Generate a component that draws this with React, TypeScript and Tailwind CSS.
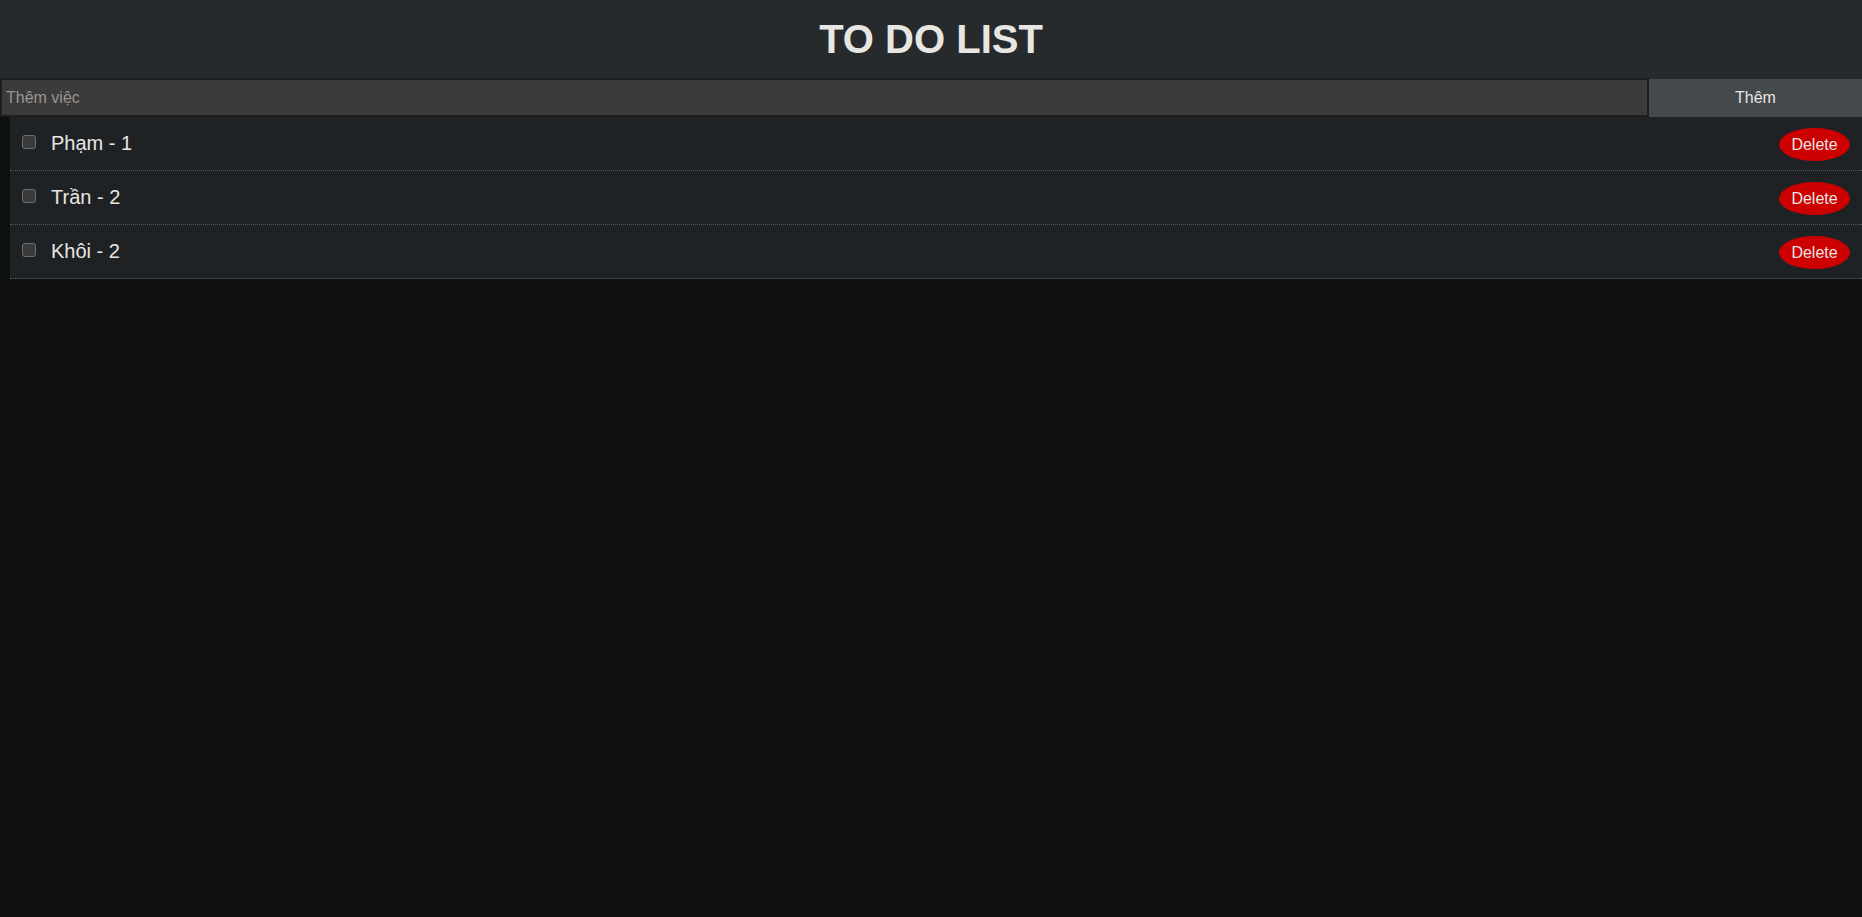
import { useState } from 'react';

type Todo = { id: number; title: string; done: boolean };

const INITIAL: Todo[] = [
  { id: 1, title: 'Phạm - 1', done: false },
  { id: 2, title: 'Trần - 2', done: false },
  { id: 3, title: 'Khôi - 2', done: false },
];

export default function App() {
  const [todos, setTodos] = useState<Todo[]>(INITIAL);
  const [text, setText] = useState('');

  const addTodo = () => {
    if (!text.trim()) return;
    setTodos([...todos, { id: Date.now(), title: text.trim(), done: false }]);
    setText('');
  };

  return (
    <div className="min-h-screen bg-[#0f1110] font-['Liberation_Sans',Arial,sans-serif] text-[#e8e6e3]">
      {/* Header */}
      <header className="h-[78px] bg-[#262a2c] flex items-center justify-center">
        <h1 className="text-[40px] font-bold leading-none tracking-normal">TO DO LIST</h1>
      </header>

      {/* Input row */}
      <div className="flex h-[39px] bg-[#262a2c]">
        <input
          autoFocus
          value={text}
          onChange={(e) => setText(e.target.value)}
          placeholder="Thêm việc"
          className="flex-1 min-w-0 h-full bg-[#3b3b3b] border-2 border-[#1b1d1e] px-[4px] text-[16px] text-[#e8e6e3] placeholder:text-[#9a9590] outline-none"
        />
        <button
          onClick={addTodo}
          className="w-[213px] h-[38px] mt-[1px] bg-[#44494c] text-[16px] text-[#e8e6e3]"
        >
          Thêm
        </button>
      </div>

      {/* List */}
      <ul className="ml-[10px] bg-[#1f2224]">
        {todos.map((todo) => (
          <li
            key={todo.id}
            className="h-[54px] flex items-center pl-[12px] pr-[12px] border-b border-dotted border-[#5a5a5a]"
          >
            <input
              type="checkbox"
              checked={todo.done}
              onChange={() =>
                setTodos(todos.map((t) => (t.id === todo.id ? { ...t, done: !t.done } : t)))
              }
              className="appearance-none w-[14px] h-[14px] -mt-[4px] rounded-[3px] border border-[#6e6e6e] bg-[#3a3a3a] shrink-0"
            />
            <span className={`ml-[15px] text-[20px] -mt-[1px] ${todo.done ? 'line-through' : ''}`}>
              {todo.title}
            </span>
            <button
              onClick={() => setTodos(todos.filter((t) => t.id !== todo.id))}
              className="ml-auto w-[71px] h-[33px] rounded-[50%] bg-[#cc0000] text-[16px] text-[#e8e6e3] mt-[2px]"
            >
              Delete
            </button>
          </li>
        ))}
      </ul>
    </div>
  );
}
